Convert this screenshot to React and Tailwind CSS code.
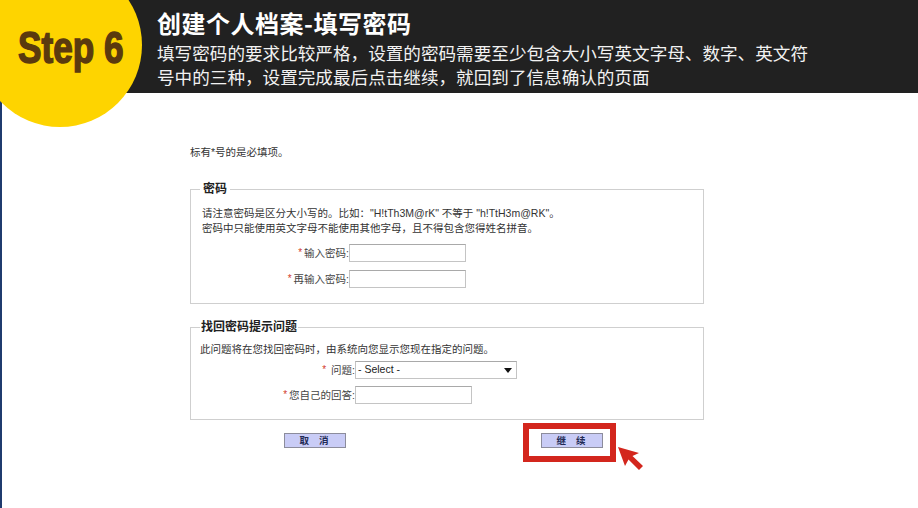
import React from 'react';

const cjk = "font-['Liberation_Sans','Noto_Sans_CJK_SC',sans-serif]";

function Req() {
  return <span className="text-[#d23a2a] mr-[2px] text-[10px] align-top">*</span>;
}

function TextInput({ w = 'w-[117px]' }) {
  return <div className={`h-[18px] ${w} border border-[#c4c4c4] border-t-[#a9a9a9] bg-white`} />;
}

function Row({ labelW, label, children }) {
  return (
    <div className="flex items-center">
      <div className={`${labelW} text-right text-[10.5px] text-[#444] leading-[18px]`}>
        <Req />
        {label}:
      </div>
      {children}
    </div>
  );
}

function Btn({ children }) {
  return (
    <button className="block w-[62px] h-[15px] bg-[#c9ccf6] border border-[#8c8c9c] text-[9.5px] font-bold text-[#222a55] leading-[13px] tracking-[10px] pl-[8px]">
      {children}
    </button>
  );
}

export default function App() {
  return (
    <div className={`relative w-[918px] h-[508px] overflow-hidden bg-white ${cjk}`}>
      {/* top banner */}
      <header className="h-[93px] bg-[#212121] pl-[157px] pt-[8px] font-['Noto_Sans_CJK_SC',sans-serif]">
        <h1 className="text-[24px] leading-[30px] font-bold text-white tracking-[0.5px]">创建个人档案-填写密码</h1>
        <p className="mt-[3px] text-[17.6px] leading-[24px] text-[#f2f2f2]">
          填写密码的要求比较严格，设置的密码需要至少包含大小写英文字母、数字、英文符
          <br />
          号中的三种，设置完成最后点击继续，就回到了信息确认的页面
        </p>
      </header>

      <div className="absolute left-[-22px] top-[-37px] w-[164px] h-[164px] rounded-full bg-[#fed400]" />
      <div className="absolute left-[18px] top-[26px] origin-left scale-x-[0.8] text-[44px] leading-[44px] font-bold text-[#5b3a0e] font-['Liberation_Sans',sans-serif] [-webkit-text-stroke:1.5px_#5b3a0e] whitespace-nowrap">
        Step 6
      </div>

      {/* page body */}
      <main className="h-[415px] border-l-2 border-[#1f3b6e] pl-[188px] pt-[51px]">
        <div className="w-[514px] text-[#333]">
          <p className="text-[10.5px] leading-[16px]">标有*号的是必填项。</p>

          <fieldset className="mt-[21px] border border-[#cfcfcf] px-[11px] pb-[15px]">
            <legend className="ml-[-2px] px-[3px] text-[12px] leading-[16px] font-bold text-[#222]">密码</legend>
            <div className="mt-[9px] text-[10.5px] leading-[15px]">
              <p>请注意密码是区分大小写的。比如："H!tTh3M@rK" 不等于 "h!TtH3m@RK"。</p>
              <p>密码中只能使用英文字母不能使用其他字母，且不得包含您得姓名拼音。</p>
            </div>
            <div className="mt-[8px] flex flex-col gap-[8px]">
              <Row labelW="w-[147px]" label="输入密码"><TextInput /></Row>
              <Row labelW="w-[147px]" label="再输入密码"><TextInput /></Row>
            </div>
          </fieldset>

          <fieldset className="mt-[15px] border border-[#cfcfcf] px-[11px] pb-[15px]">
            <legend className="ml-[-2px] px-[1px] text-[12px] leading-[16px] font-bold text-[#222]">找回密码提示问题</legend>
            <p className="mt-[7px] ml-[-2px] text-[10.5px] leading-[15px]">此问题将在您找回密码时，由系统向您显示您现在指定的问题。</p>
            <div className="mt-[4px] flex flex-col gap-[7px]">
              <Row labelW="w-[153px]" label=" 问题">
                <div className="h-[18px] w-[162px] border border-[#c4c4c4] border-t-[#a9a9a9] bg-white flex items-center justify-between px-[2px] text-[10.5px] text-[#222]">
                  <span>- Select -</span>
                  <svg width="8" height="5" viewBox="0 0 8 5" className="mr-[2px]"><path d="M0 0h8L4 5z" fill="#111" /></svg>
                </div>
              </Row>
              <Row labelW="w-[153px]" label="您自己的回答"><TextInput /></Row>
            </div>
          </fieldset>

          <div className="mt-[13px] flex items-start pl-[94px] gap-[195px]">
            <Btn>取消</Btn>
            <div className="relative flex">
              <Btn>继续</Btn>
              <div className="absolute left-[-18px] top-[-10px] w-[93px] h-[39px] border-[6px] border-[#d3261d]" />
              <svg className="absolute left-[76px] top-[13px]" width="30" height="26" viewBox="0 0 30 26">
                <path d="M1 1 L8 20 L11.5 13.5 L22 24 L26 20 L15.5 10 L22 7 Z" fill="#d3261d" />
              </svg>
            </div>
          </div>
        </div>
      </main>
    </div>
  );
}
